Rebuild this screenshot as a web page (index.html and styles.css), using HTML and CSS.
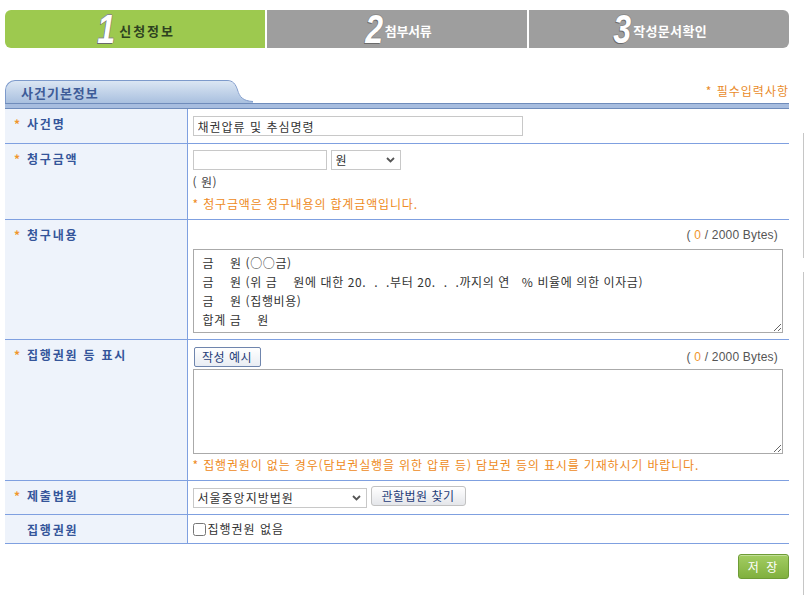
FILE: index.html
```html
<!DOCTYPE html>
<html lang="ko">
<head>
<meta charset="utf-8">
<title>사건기본정보</title>
<link rel="stylesheet" href="styles.css">
</head>
<body>
<div class="page">
  <ol class="steps">
    <li class="step active"><span class="num">1</span><span class="lbl lbl1">신청정보</span></li>
    <li class="step"><span class="num">2</span><span class="lbl">첨부서류</span></li>
    <li class="step"><span class="num">3</span><span class="lbl lbl3">작성문서확인</span></li>
  </ol>

  <div class="sec-head">
    <div class="tab">
      <span class="tab-title">사건기본정보</span>
      <svg class="tab-curve" width="26" height="23" viewBox="0 0 26 23">
        <defs>
          <linearGradient id="tg" x1="0" y1="0" x2="0" y2="1">
            <stop offset="0" stop-color="#dbe6f3"/>
            <stop offset="1" stop-color="#a9c0df"/>
          </linearGradient>
        </defs>
        <path d="M0 1 C6 1 8 4 10 10 C12 17 16 21 26 21.5 L26 23 L0 23 Z" fill="url(#tg)"/>
        <path d="M0 0.5 C6 0.5 8.5 4 10.5 10 C12.5 17 16 21 26 21.5" fill="none" stroke="#7d9acb" stroke-width="1"/>
      </svg>
    </div>
    <span class="required">* 필수입력사항</span>
  </div>
  <div class="sec-bar"></div>

  <table class="form">
    <tr class="r1">
      <th><span class="ast">*</span>사건명</th>
      <td><input class="inp inp-name" type="text" value="채권압류 및 추심명령"></td>
    </tr>
    <tr class="r2">
      <th><span class="ast">*</span>청구금액</th>
      <td>
        <div class="line">
          <input class="inp inp-amt" type="text" value="">
          <span class="sel sel-unit"><select><option>원</option></select><svg class="chev" width="9" height="6" viewBox="0 0 9 6"><path d="M1 1 L4.5 4.5 L8 1" fill="none" stroke="#555" stroke-width="1.8"/></svg></span>
        </div>
        <div class="txt amt-unit">( 원)</div>
        <div class="note">* 청구금액은 청구내용의 합계금액입니다.</div>
      </td>
    </tr>
    <tr class="r3">
      <th><span class="ast">*</span>청구내용</th>
      <td>
        <div class="bytes">( <span class="cnt">0</span> / 2000 Bytes)</div>
        <textarea class="ta ta1">금    원 (○○금)
금    원 (위 금    원에 대한 20.  .  .부터 20.  .  .까지의 연   % 비율에 의한 이자금)
금    원 (집행비용)
합계 금    원</textarea>
      </td>
    </tr>
    <tr class="r4">
      <th><span class="ast">*</span>집행권원 등 표시</th>
      <td>
        <div class="line between">
          <button class="btn btn-ex" type="button">작성 예시</button>
          <span class="bytes">( <span class="cnt">0</span> / 2000 Bytes)</span>
        </div>
        <textarea class="ta ta2"></textarea>
        <div class="note note2">* 집행권원이 없는 경우(담보권실행을 위한 압류 등) 담보권 등의 표시를 기재하시기 바랍니다.</div>
      </td>
    </tr>
    <tr class="r5">
      <th><span class="ast">*</span>제출법원</th>
      <td>
        <div class="line">
          <span class="sel sel-court"><select><option>서울중앙지방법원</option></select><svg class="chev" width="9" height="6" viewBox="0 0 9 6"><path d="M1 1 L4.5 4.5 L8 1" fill="none" stroke="#555" stroke-width="1.8"/></svg></span>
          <button class="btn btn-find" type="button">관할법원 찾기</button>
        </div>
      </td>
    </tr>
    <tr class="r6">
      <th><span class="ast"></span>집행권원</th>
      <td><label class="chk"><input type="checkbox"><span>집행권원 없음</span></label></td>
    </tr>
  </table>

  <div class="actions">
    <button class="btn-save" type="button">저 장</button>
  </div>
</div>
<div class="scroll-edge top"></div>
<div class="scroll-edge bottom"></div>
</body>
</html>
```

FILE: styles.css
```css
* { box-sizing: border-box; }
html, body { margin: 0; padding: 0; background: #fff; }
body {
  font-family: "Noto Sans CJK KR", "Liberation Sans", sans-serif;
  font-size: 12px;
  color: #333;
  width: 806px;
  height: 595px;
  overflow: hidden;
  position: relative;
}
.page {
  width: 784px;
  margin-left: 5px;
  padding-top: 10px;
}

/* steps */
.steps {
  list-style: none;
  margin: 0;
  padding: 0;
  display: flex;
  gap: 2px;
  height: 38px;
}
.step {
  flex: 1;
  background: #9e9e9e;
  display: flex;
  align-items: center;
  justify-content: center;
  color: #fff;
}
.step:first-child { border-radius: 6px 0 0 6px; }
.step:last-child { border-radius: 0 6px 6px 0; }
.step.active { background: #9dc94f; }
.num {
  font-family: "Liberation Sans", sans-serif;
  font-style: italic;
  font-weight: bold;
  font-size: 40px;
  line-height: 38px;
  color: #fff;
  text-shadow: -1px 1px 0 #6a6a6a, 1px 0 0 #8a8a8a, 0 -1px 0 #8a8a8a;
  margin-right: 0;
  transform: scaleX(0.8);
}
.lbl {
  font-weight: bold;
  font-size: 13px;
  letter-spacing: -0.3px;
  color: #fff;
  margin-top: 2px;
}
.lbl1 { color: #2e4220; letter-spacing: 2px; margin-left: 2px; }
.lbl3 { letter-spacing: 0.3px; }

/* section header */
.sec-head {
  margin-top: 32px;
  height: 23px;
  display: flex;
  align-items: flex-start;
  justify-content: space-between;
}
.tab {
  display: flex;
  height: 23px;
}
.tab-title {
  width: 222px;
  height: 23px;
  border: 1px solid #7d9acb;
  border-right: none;
  border-bottom: none;
  border-radius: 10px 0 0 0;
  background: linear-gradient(#dbe6f3, #a9c0df);
  font-weight: bold;
  font-size: 13px;
  color: #3e5c98;
  padding-left: 15px;
  line-height: 24px;
  letter-spacing: 1px;
}
.tab-curve { display: block; height: 23px; }
.required {
  color: #e98b2a;
  font-size: 12px;
  margin-top: 2px;
  letter-spacing: 1px;
}
.sec-bar {
  height: 6px;
  background: #a7bddf;
  border-top: 1px solid #6f8cbb;
  border-bottom: 1px solid #6f8cbb;
}

/* form table */
.form {
  width: 784px;
  border-collapse: collapse;
  table-layout: fixed;
}
.form th, .form td {
  border-bottom: 1px solid #7fa0e0;
  vertical-align: top;
  padding: 0;
}
.form th {
  width: 182px;
  background: #eef3fb;
  border-right: 1px solid #7fa0e0;
  text-align: left;
  font-weight: bold;
  font-size: 12px;
  line-height: 16px;
  color: #34559a;
  letter-spacing: 1.8px;
  padding: 7px 0 0 9px;
}
.ast {
  display: inline-block;
  width: 13px;
  color: #f0962c;
  font-weight: bold;
}
.form td {
  padding: 6px 8px 6px 5px;
  letter-spacing: 1px;
}
.r1 td { padding-top: 7px; }
.r1 th, .r1 td { height: 34px; }

.line { display: flex; align-items: center; gap: 4px; height: 20px; }
.line.between { justify-content: space-between; }

.inp {
  height: 20px;
  border: 1px solid #c8c8c8;
  font-family: "Noto Sans CJK KR", "Liberation Sans", sans-serif;
  font-size: 12px;
  letter-spacing: 1px;
  color: #333;
  padding: 0 4px;
  margin: 0;
  outline: none;
}
.inp-name { width: 330px; }
.inp-amt { width: 134px; }

.sel { position: relative; display: inline-block; height: 20px; }
.sel select {
  appearance: none;
  -webkit-appearance: none;
  height: 20px;
  border: 1px solid #c8c8c8;
  background: #fff;
  font-family: "Noto Sans CJK KR", "Liberation Sans", sans-serif;
  font-size: 12px;
  letter-spacing: 1px;
  color: #333;
  padding: 0 4px;
  margin: 0;
  border-radius: 0;
  outline: none;
}
.sel-unit select { width: 70px; }
.sel-court select { width: 174px; }
.chev { position: absolute; right: 6px; top: 7px; }

.txt { margin-top: 3px; line-height: 18px; color: #444; letter-spacing: 0.5px; }
.note {
  margin-top: 4px;
  line-height: 18px;
  color: #ee8a22;
  letter-spacing: 0.85px;
  white-space: nowrap;
}
.note2 { margin-top: 3px; line-height: 16px; letter-spacing: 0.85px; }

.bytes {
  text-align: right;
  font-family: "Liberation Sans", "Noto Sans CJK KR", sans-serif;
  font-size: 12px;
  color: #555;
  line-height: 16px;
  padding-right: 3px;
  letter-spacing: 0.2px;
}
.cnt { color: #f0962c; }
.r3 td { padding-top: 7px; }

.ta {
  display: block;
  width: 590px;
  border: 1px solid #aaa;
  font-family: "Noto Sans CJK KR", "Liberation Sans", sans-serif;
  font-size: 12px;
  letter-spacing: 0.6px;
  line-height: 19px;
  color: #333;
  padding: 3px 9px;
  margin: 0;
  outline: none;
  overflow: hidden;
  white-space: pre;
}
.ta1 { height: 84px; margin-top: 6px; }
.ta2 { height: 85px; margin-top: 2px; }
.r4 td { padding-top: 7px; padding-bottom: 7px; }

.btn {
  height: 20px;
  font-family: "Noto Sans CJK KR", "Liberation Sans", sans-serif;
  font-size: 12px;
  letter-spacing: 0.5px;
  color: #1f3c78;
  padding: 0 4px;
  margin: 0;
  line-height: 16px;
  cursor: pointer;
  white-space: nowrap;
}
.btn-ex {
  margin-left: 1px;
  width: 67px;
  border: 1px solid #6f85ad;
  border-radius: 2px;
  background: linear-gradient(#ffffff, #e9edf3);
}
.r5 td { padding-top: 7px; }
.btn-find {
  width: 95px;
  margin-top: -3px;
  border: 1px solid #c2c2c2;
  border-radius: 3px;
  background: linear-gradient(#ffffff, #e4e6ea);
}

.chk { display: flex; align-items: center; gap: 2px; height: 20px; color: #333; }
.chk input {
  margin: 2px 0 0 0;
  width: 13px;
  height: 13px;
}
.r6 td { padding-top: 4px; padding-bottom: 4px; }

.actions {
  display: flex;
  justify-content: flex-end;
  margin-top: 10px;
}
.btn-save {
  width: 51px;
  height: 25px;
  border: 1px solid #6e9c36;
  border-radius: 3px;
  background: linear-gradient(#a3cd62, #80b03e);
  color: #fff;
  font-family: "Noto Sans CJK KR", "Liberation Sans", sans-serif;
  font-size: 12px;
  letter-spacing: 2px;
  padding: 0;
  box-shadow: inset 0 1px 0 rgba(255,255,255,0.35);
}

.scroll-edge {
  position: absolute;
  left: 803px;
  width: 1px;
  background: #c6c6c6;
}
.scroll-edge.top { top: 133px; height: 125px; }
.scroll-edge.bottom { top: 272px; height: 323px; }
```
